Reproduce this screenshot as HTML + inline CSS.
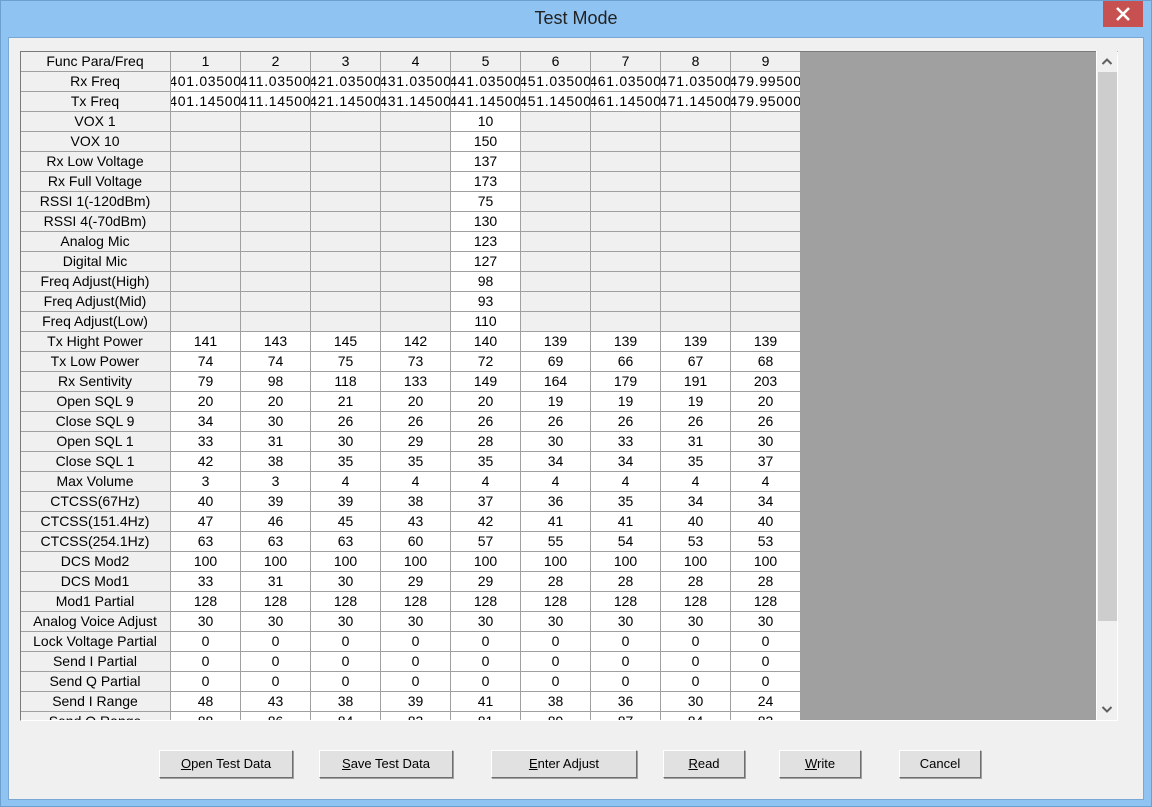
<!DOCTYPE html>
<html><head><meta charset="utf-8"><style>
*{margin:0;padding:0;box-sizing:border-box}
body{width:1152px;height:807px;background:#8fc3f2;position:relative;overflow:hidden;font-family:"Liberation Sans",sans-serif;box-shadow:inset 0 0 0 1px #6d9fcf}
.title{position:absolute;left:0;top:8px;width:1152px;text-align:center;font-size:18px;color:#222}
.close{position:absolute;left:1103px;top:1px;width:40px;height:26px;background:#c75050}
.client{position:absolute;left:8px;top:37px;width:1136px;height:763px;background:#f0f0f0;border:1px solid #7aa8d4}
.grid{position:absolute;left:20px;top:51px;width:1098px;height:670px;background:#a0a0a0;overflow:hidden;border-top:1px solid #7a7a7a;border-left:1px solid #7a7a7a;border-right:1px solid #fff;border-bottom:1px solid #fff}
table{border-collapse:collapse;position:absolute;left:-1px;top:-1px;table-layout:fixed;background:#fff;width:780px}
td{height:20px;border:1px solid #a0a0a0;padding:0;font-size:14px;color:#000;width:70px;overflow:hidden}
td div{display:flex;justify-content:center;overflow:hidden;white-space:nowrap;line-height:19px;height:19px;width:69px}
td.h div{width:148px}
td.f div{letter-spacing:0.7px}
td.h{background:#f0f0f0;width:150px}
tr.hd td{background:#f0f0f0}
td.e{background:#f0f0f0}
.sb{position:absolute;left:1096px;top:51px;width:21px;height:669px;background:#f0f0f0;border-left:1px solid #fff}
.thumb{position:absolute;left:1px;top:21px;width:19px;height:549px;background:#cdcdcd}
.arr{position:absolute;left:0;width:20px}
.btn{position:absolute;top:750px;height:28px;background:#e1e1e1;border:1px solid;border-color:#fff #6e6e6e #6e6e6e #fff;box-shadow:1px 1px 0 #a0a0a0;font-size:13px;text-align:center;line-height:25px;color:#000}
</style></head><body>
<div class="title">Test Mode</div>
<div class="close"><svg width="40" height="26"><path d="M14 7 L26 19 M26 7 L14 19" stroke="#fff" stroke-width="2.6"/></svg></div>
<div class="client"></div>
<div class="grid"><table>
<colgroup><col style="width:150px"><col style="width:70px"><col style="width:70px"><col style="width:70px"><col style="width:70px"><col style="width:70px"><col style="width:70px"><col style="width:70px"><col style="width:70px"><col style="width:70px"></colgroup>
<tr class="hd"><td class="h"><div>Func Para/Freq</div></td><td><div>1</div></td><td><div>2</div></td><td><div>3</div></td><td><div>4</div></td><td><div>5</div></td><td><div>6</div></td><td><div>7</div></td><td><div>8</div></td><td><div>9</div></td></tr>
<tr><td class="h"><div>Rx Freq</div></td><td class="f"><div>401.03500</div></td><td class="f"><div>411.03500</div></td><td class="f"><div>421.03500</div></td><td class="f"><div>431.03500</div></td><td class="f"><div>441.03500</div></td><td class="f"><div>451.03500</div></td><td class="f"><div>461.03500</div></td><td class="f"><div>471.03500</div></td><td class="f"><div>479.99500</div></td></tr>
<tr><td class="h"><div>Tx Freq</div></td><td class="f"><div>401.14500</div></td><td class="f"><div>411.14500</div></td><td class="f"><div>421.14500</div></td><td class="f"><div>431.14500</div></td><td class="f"><div>441.14500</div></td><td class="f"><div>451.14500</div></td><td class="f"><div>461.14500</div></td><td class="f"><div>471.14500</div></td><td class="f"><div>479.95000</div></td></tr>
<tr><td class="h"><div>VOX 1</div></td><td class="e"></td><td class="e"></td><td class="e"></td><td class="e"></td><td><div>10</div></td><td class="e"></td><td class="e"></td><td class="e"></td><td class="e"></td></tr>
<tr><td class="h"><div>VOX 10</div></td><td class="e"></td><td class="e"></td><td class="e"></td><td class="e"></td><td><div>150</div></td><td class="e"></td><td class="e"></td><td class="e"></td><td class="e"></td></tr>
<tr><td class="h"><div>Rx Low Voltage</div></td><td class="e"></td><td class="e"></td><td class="e"></td><td class="e"></td><td><div>137</div></td><td class="e"></td><td class="e"></td><td class="e"></td><td class="e"></td></tr>
<tr><td class="h"><div>Rx Full Voltage</div></td><td class="e"></td><td class="e"></td><td class="e"></td><td class="e"></td><td><div>173</div></td><td class="e"></td><td class="e"></td><td class="e"></td><td class="e"></td></tr>
<tr><td class="h"><div>RSSI 1(-120dBm)</div></td><td class="e"></td><td class="e"></td><td class="e"></td><td class="e"></td><td><div>75</div></td><td class="e"></td><td class="e"></td><td class="e"></td><td class="e"></td></tr>
<tr><td class="h"><div>RSSI 4(-70dBm)</div></td><td class="e"></td><td class="e"></td><td class="e"></td><td class="e"></td><td><div>130</div></td><td class="e"></td><td class="e"></td><td class="e"></td><td class="e"></td></tr>
<tr><td class="h"><div>Analog Mic</div></td><td class="e"></td><td class="e"></td><td class="e"></td><td class="e"></td><td><div>123</div></td><td class="e"></td><td class="e"></td><td class="e"></td><td class="e"></td></tr>
<tr><td class="h"><div>Digital Mic</div></td><td class="e"></td><td class="e"></td><td class="e"></td><td class="e"></td><td><div>127</div></td><td class="e"></td><td class="e"></td><td class="e"></td><td class="e"></td></tr>
<tr><td class="h"><div>Freq Adjust(High)</div></td><td class="e"></td><td class="e"></td><td class="e"></td><td class="e"></td><td><div>98</div></td><td class="e"></td><td class="e"></td><td class="e"></td><td class="e"></td></tr>
<tr><td class="h"><div>Freq Adjust(Mid)</div></td><td class="e"></td><td class="e"></td><td class="e"></td><td class="e"></td><td><div>93</div></td><td class="e"></td><td class="e"></td><td class="e"></td><td class="e"></td></tr>
<tr><td class="h"><div>Freq Adjust(Low)</div></td><td class="e"></td><td class="e"></td><td class="e"></td><td class="e"></td><td><div>110</div></td><td class="e"></td><td class="e"></td><td class="e"></td><td class="e"></td></tr>
<tr><td class="h"><div>Tx Hight Power</div></td><td><div>141</div></td><td><div>143</div></td><td><div>145</div></td><td><div>142</div></td><td><div>140</div></td><td><div>139</div></td><td><div>139</div></td><td><div>139</div></td><td><div>139</div></td></tr>
<tr><td class="h"><div>Tx Low Power</div></td><td><div>74</div></td><td><div>74</div></td><td><div>75</div></td><td><div>73</div></td><td><div>72</div></td><td><div>69</div></td><td><div>66</div></td><td><div>67</div></td><td><div>68</div></td></tr>
<tr><td class="h"><div>Rx Sentivity</div></td><td><div>79</div></td><td><div>98</div></td><td><div>118</div></td><td><div>133</div></td><td><div>149</div></td><td><div>164</div></td><td><div>179</div></td><td><div>191</div></td><td><div>203</div></td></tr>
<tr><td class="h"><div>Open SQL 9</div></td><td><div>20</div></td><td><div>20</div></td><td><div>21</div></td><td><div>20</div></td><td><div>20</div></td><td><div>19</div></td><td><div>19</div></td><td><div>19</div></td><td><div>20</div></td></tr>
<tr><td class="h"><div>Close SQL 9</div></td><td><div>34</div></td><td><div>30</div></td><td><div>26</div></td><td><div>26</div></td><td><div>26</div></td><td><div>26</div></td><td><div>26</div></td><td><div>26</div></td><td><div>26</div></td></tr>
<tr><td class="h"><div>Open SQL 1</div></td><td><div>33</div></td><td><div>31</div></td><td><div>30</div></td><td><div>29</div></td><td><div>28</div></td><td><div>30</div></td><td><div>33</div></td><td><div>31</div></td><td><div>30</div></td></tr>
<tr><td class="h"><div>Close SQL 1</div></td><td><div>42</div></td><td><div>38</div></td><td><div>35</div></td><td><div>35</div></td><td><div>35</div></td><td><div>34</div></td><td><div>34</div></td><td><div>35</div></td><td><div>37</div></td></tr>
<tr><td class="h"><div>Max Volume</div></td><td><div>3</div></td><td><div>3</div></td><td><div>4</div></td><td><div>4</div></td><td><div>4</div></td><td><div>4</div></td><td><div>4</div></td><td><div>4</div></td><td><div>4</div></td></tr>
<tr><td class="h"><div>CTCSS(67Hz)</div></td><td><div>40</div></td><td><div>39</div></td><td><div>39</div></td><td><div>38</div></td><td><div>37</div></td><td><div>36</div></td><td><div>35</div></td><td><div>34</div></td><td><div>34</div></td></tr>
<tr><td class="h"><div>CTCSS(151.4Hz)</div></td><td><div>47</div></td><td><div>46</div></td><td><div>45</div></td><td><div>43</div></td><td><div>42</div></td><td><div>41</div></td><td><div>41</div></td><td><div>40</div></td><td><div>40</div></td></tr>
<tr><td class="h"><div>CTCSS(254.1Hz)</div></td><td><div>63</div></td><td><div>63</div></td><td><div>63</div></td><td><div>60</div></td><td><div>57</div></td><td><div>55</div></td><td><div>54</div></td><td><div>53</div></td><td><div>53</div></td></tr>
<tr><td class="h"><div>DCS Mod2</div></td><td><div>100</div></td><td><div>100</div></td><td><div>100</div></td><td><div>100</div></td><td><div>100</div></td><td><div>100</div></td><td><div>100</div></td><td><div>100</div></td><td><div>100</div></td></tr>
<tr><td class="h"><div>DCS Mod1</div></td><td><div>33</div></td><td><div>31</div></td><td><div>30</div></td><td><div>29</div></td><td><div>29</div></td><td><div>28</div></td><td><div>28</div></td><td><div>28</div></td><td><div>28</div></td></tr>
<tr><td class="h"><div>Mod1 Partial</div></td><td><div>128</div></td><td><div>128</div></td><td><div>128</div></td><td><div>128</div></td><td><div>128</div></td><td><div>128</div></td><td><div>128</div></td><td><div>128</div></td><td><div>128</div></td></tr>
<tr><td class="h"><div>Analog Voice Adjust</div></td><td><div>30</div></td><td><div>30</div></td><td><div>30</div></td><td><div>30</div></td><td><div>30</div></td><td><div>30</div></td><td><div>30</div></td><td><div>30</div></td><td><div>30</div></td></tr>
<tr><td class="h"><div>Lock Voltage Partial</div></td><td><div>0</div></td><td><div>0</div></td><td><div>0</div></td><td><div>0</div></td><td><div>0</div></td><td><div>0</div></td><td><div>0</div></td><td><div>0</div></td><td><div>0</div></td></tr>
<tr><td class="h"><div>Send I Partial</div></td><td><div>0</div></td><td><div>0</div></td><td><div>0</div></td><td><div>0</div></td><td><div>0</div></td><td><div>0</div></td><td><div>0</div></td><td><div>0</div></td><td><div>0</div></td></tr>
<tr><td class="h"><div>Send Q Partial</div></td><td><div>0</div></td><td><div>0</div></td><td><div>0</div></td><td><div>0</div></td><td><div>0</div></td><td><div>0</div></td><td><div>0</div></td><td><div>0</div></td><td><div>0</div></td></tr>
<tr><td class="h"><div>Send I Range</div></td><td><div>48</div></td><td><div>43</div></td><td><div>38</div></td><td><div>39</div></td><td><div>41</div></td><td><div>38</div></td><td><div>36</div></td><td><div>30</div></td><td><div>24</div></td></tr>
<tr><td class="h"><div>Send Q Range</div></td><td><div>88</div></td><td><div>86</div></td><td><div>84</div></td><td><div>83</div></td><td><div>81</div></td><td><div>89</div></td><td><div>87</div></td><td><div>84</div></td><td><div>83</div></td></tr>
</table></div>
<div class="sb"><svg class="arr" style="top:0" width="20" height="20"><path d="M5.5 13 L10 8.5 L14.5 13" fill="none" stroke="#606060" stroke-width="2"/></svg><div class="thumb"></div><svg class="arr" style="top:648px" width="20" height="20"><path d="M5.5 8 L10 12.5 L14.5 8" fill="none" stroke="#606060" stroke-width="2"/></svg></div>
<div class="btn" style="left:159px;width:134px"><u>O</u>pen Test Data</div>
<div class="btn" style="left:319px;width:134px"><u>S</u>ave Test Data</div>
<div class="btn" style="left:491px;width:146px"><u>E</u>nter Adjust</div>
<div class="btn" style="left:663px;width:82px"><u>R</u>ead</div>
<div class="btn" style="left:779px;width:82px"><u>W</u>rite</div>
<div class="btn" style="left:899px;width:82px">Cancel</div>
</body></html>
